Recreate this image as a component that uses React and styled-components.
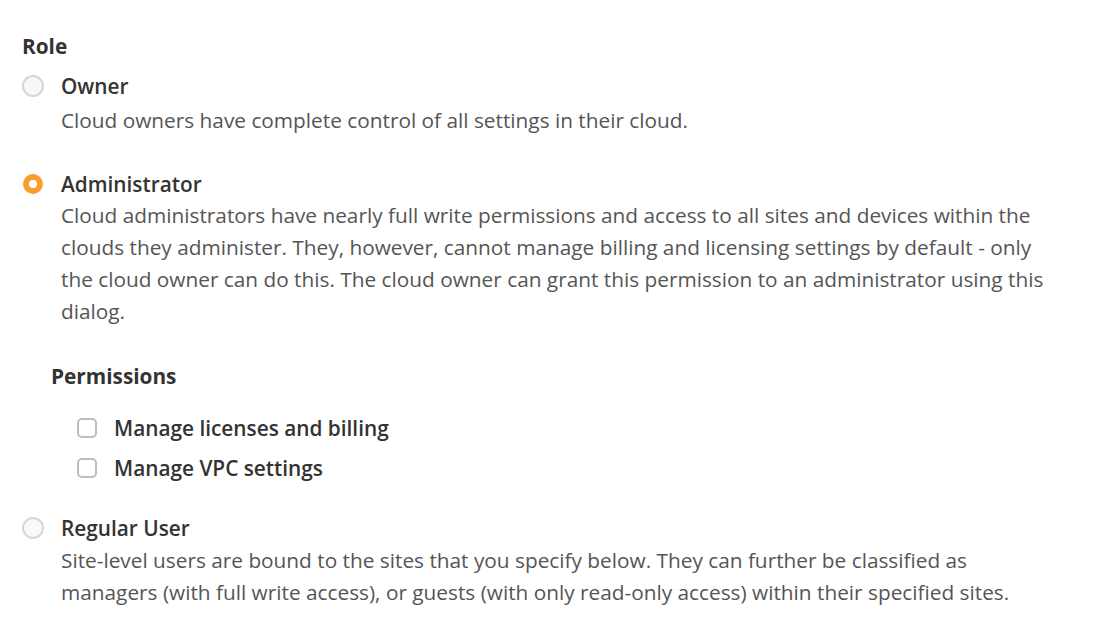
import React from "react";
import styled, { createGlobalStyle } from "styled-components";

const Global = createGlobalStyle`
  html, body { margin: 0; padding: 0; background: #fff; }
  body { font-family: "Open Sans", "Liberation Sans", sans-serif; color: #333; }
`;

const Page = styled.div`
  padding: 33px 22px 20px 22px;
  width: 1080px;
  box-sizing: border-box;
`;

const Heading = styled.div`
  font-size: 20.8px;
  font-weight: 700;
  color: #333;
  line-height: 26px;
  margin-bottom: 14px;
`;

const Option = styled.div`
  display: grid;
  grid-template-columns: 22px 1fr;
  column-gap: 17px;
  margin-bottom: ${(p) => p.$gap || 0}px;
`;

const RadioDot = styled.span`
  width: 22px;
  height: 22px;
  box-sizing: border-box;
  border-radius: 50%;
  margin-top: 2px;
  ${(p) =>
    p.$checked
      ? `border: 6px solid #f99e2d; background: #fff; width: 20px; height: 20px; margin: 3px 0 0 1px;`
      : `border: 2px solid #d6d6d6; background: #f8f8f8;`}
`;

const Label = styled.div`
  font-size: 20.8px;
  font-weight: 600;
  color: #333;
  line-height: 26px;
`;

const Desc = styled.div`
  grid-column: 2;
  font-size: 20.8px;
  color: #555;
  line-height: 32px;
  margin-top: ${(p) => p.$top ?? 2}px;
`;

const Sub = styled.div`
  padding-left: 29px;
  margin: 36px 0 34px;
`;

const SubHeading = styled(Heading)`
  margin-bottom: 26px;
`;

const CheckRow = styled.label`
  display: flex;
  align-items: center;
  gap: 17px;
  padding-left: 26px;
  height: 26px;
  margin-bottom: 14px;
  font-size: 20.8px;
  font-weight: 600;
  color: #333;
`;

const Box = styled.span`
  width: 20px;
  height: 20px;
  box-sizing: border-box;
  border: 2px solid #bdbdbd;
  border-radius: 5px;
  background: #fff;
`;

export default function App() {
  return (
    <Page>
      <Global />
      <Heading>Role</Heading>
      <Option $gap={35}>
        <RadioDot />
        <Label>Owner</Label>
        <Desc $top={5}>Cloud owners have complete control of all settings in their cloud.</Desc>
      </Option>
      <Option>
        <RadioDot $checked />
        <Label>Administrator</Label>
        <Desc>
          Cloud administrators have nearly full write permissions and access to all sites and devices within the
          clouds they administer. They, however, cannot manage billing and licensing settings by default - only
          the cloud owner can do this. The cloud owner can grant this permission to an administrator using this
          dialog.
        </Desc>
      </Option>
      <Sub>
        <SubHeading>Permissions</SubHeading>
        <CheckRow>
          <Box />
          Manage licenses and billing
        </CheckRow>
        <CheckRow>
          <Box />
          Manage VPC settings
        </CheckRow>
      </Sub>
      <Option>
        <RadioDot />
        <Label>Regular User</Label>
        <Desc $top={3}>
          Site-level users are bound to the sites that you specify below. They can further be classified as
          managers (with full write access), or guests (with only read-only access) within their specified sites.
        </Desc>
      </Option>
    </Page>
  );
}
